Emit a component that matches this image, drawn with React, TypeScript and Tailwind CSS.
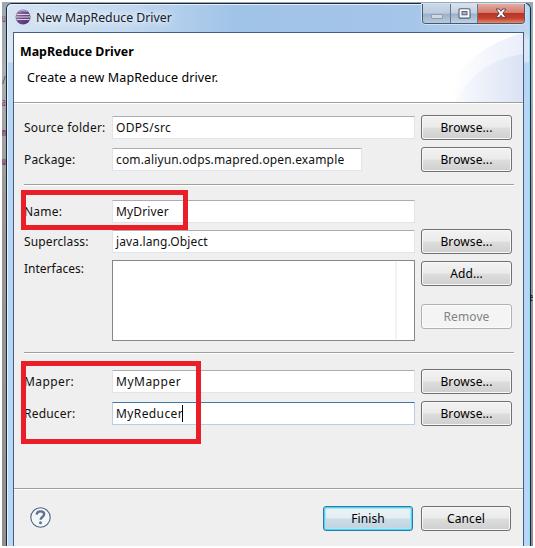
import type { ReactNode } from "react";

function Button({ children, kind = "normal", className = "" }: { children: ReactNode; kind?: "normal" | "default" | "disabled"; className?: string }) {
  const look =
    kind === "default"
      ? "border-[#2c7ba0] text-black bg-[linear-gradient(#eef4f8_0%,#e3edf3_48%,#cbdde8_52%,#bfd3df_100%)] shadow-[inset_0_0_0_1px_#52d3f3,inset_0_0_1px_2px_#a5e6f7]"
      : kind === "disabled"
        ? "border-[#adb2b5] text-[#838383] bg-[#f4f4f4] shadow-[inset_0_0_0_1px_#fbfbfb]"
        : "border-[#707070] text-black bg-[linear-gradient(#f2f2f2_0%,#ebebeb_48%,#dddddd_52%,#cfcfcf_100%)] shadow-[inset_0_0_0_1px_#f8f8f8]";
  return (
    <button className={`flex h-[25px] items-center justify-center rounded-[3px] border tracking-[0.1px] ${look} ${className}`}>
      {children}
    </button>
  );
}

function Field({ value, width = "w-[303px]", spacing, focused = false }: { value: string; width?: string; spacing: string; focused?: boolean }) {
  return (
    <div
      className={`flex h-[23px] items-center rounded-[1px] border bg-white pl-[3px] ${width} ${
        focused ? "border-[#b5cfe7] border-t-[#3d7bad]" : "border-[#e2e3ea] border-t-[#abadb3]"
      }`}
    >
      <span className={spacing}>{value}</span>
      {focused && <span className="-ml-px h-[17px] w-px bg-black" />}
    </div>
  );
}

function Row({ label, spacing, children, button }: { label: string; spacing: string; children: ReactNode; button?: boolean }) {
  return (
    <div className="flex h-[25px] items-center">
      <span className={`w-[88px] ${spacing}`}>{label}</span>
      <div className="w-[309px]">{children}</div>
      {button && <Button className="w-[91px]">Browse...</Button>}
    </div>
  );
}

function Separator() {
  return <div className="h-[2px] w-[490px] border-b border-white bg-[#a0a0a0]" />;
}

function EclipseIcon() {
  return (
    <svg width="16" height="16" viewBox="0 0 16 16">
      <defs>
        <linearGradient id="orb" x1="0" y1="0" x2="1" y2="1">
          <stop offset="0" stopColor="#a08cb2" />
          <stop offset="0.5" stopColor="#6b4b85" />
          <stop offset="1" stopColor="#4a2c66" />
        </linearGradient>
      </defs>
      <circle cx="8" cy="8" r="7.5" fill="url(#orb)" />
      <path d="M1.5 5.5h13M.8 8h14.4M1.5 10.5h13" stroke="#ddd0e8" strokeWidth="1.1" />
      <path d="M4 2.4Q8 .4 12 2.4" stroke="#c1b0cc" fill="none" />
    </svg>
  );
}

function TitleBar() {
  return (
    <div className="flex h-[27px] items-start justify-between">
      <div className="flex items-start pt-[4px] pl-[8px]">
        <EclipseIcon />
        <span className="ml-[5px] text-[12.3px] leading-[18px] text-[#15202c] [text-shadow:0_0_8px_white,0_0_8px_white]">New MapReduce Driver</span>
      </div>
      <div className="-mt-px mr-[5px] flex h-[20px] w-[103px] overflow-hidden rounded-b-[4px] border border-t-0 border-[#4b596b] shadow-[0_0_0_1px_#d0e2f4]">
        <div className="flex w-[28px] justify-center border-r border-[#66778b] bg-[linear-gradient(#cad9e8_0%,#bdccde_48%,#9bb0ca_52%,#b6c9dc_100%)] pt-[10px]">
          <div className="h-[5px] w-[12px] rounded-[1px] border border-[#929eae] bg-[#d0d8e1]" />
        </div>
        <div className="flex w-[27px] justify-center border-r border-[#66778b] bg-[linear-gradient(#d8e2ee_0%,#c3d0df_48%,#9bb0ca_52%,#bfd2e4_100%)] pt-[4px]">
          <svg width="13" height="11" viewBox="0 0 13 11">
            <rect x="1" y=".7" width="11" height="9.4" rx="1" fill="#f9fafc" stroke="#526073" strokeWidth="1.1" />
            <rect x="4" y="3.6" width="5" height="3.2" fill="#a8b8cb" stroke="#526073" />
          </svg>
        </div>
        <div className="flex flex-1 justify-center bg-[linear-gradient(#e5aba1_0%,#d37b6d_45%,#b83526_50%,#c6402d_75%,#e08a6c_100%)] pt-[4px]">
          <svg width="12" height="11" viewBox="0 0 12 11">
            <path d="M1 1h3.2L6 3.3 7.8 1H11L7.8 5.3 11 9.6H7.8L6 7.3 4.2 9.6H1l3.2-4.3z" fill="white" stroke="#5d4650" strokeWidth="1" />
          </svg>
        </div>
      </div>
    </div>
  );
}

function Header() {
  return (
    <div className="flex h-[69px] justify-between bg-white">
      <div className="pt-[10px] pl-[6px] text-black">
        <div className="text-[12.4px] leading-[18px] font-bold">MapReduce Driver</div>
        <div className="mt-[8px] pl-[7px] text-[12.5px] leading-[18px] tracking-[0.1px]">Create a new MapReduce driver.</div>
      </div>
      <svg width="80" height="69" viewBox="0 0 80 69">
        <defs>
          <linearGradient id="arcA" x1="0" x2="1">
            <stop offset="0.1" stopColor="#fff" />
            <stop offset="1" stopColor="#e9eef9" />
          </linearGradient>
          <linearGradient id="arcB" x1="0" x2="1">
            <stop offset="0" stopColor="#f9fbfe" />
            <stop offset="1" stopColor="#dae2f4" />
          </linearGradient>
        </defs>
        <path d="M0 69Q20 16 80 0V69Z" fill="url(#arcA)" />
        <path d="M12 69Q33 28 80 21V69Z" fill="url(#arcB)" />
      </svg>
    </div>
  );
}

export default function App() {
  return (
    <div className="relative h-[548px] w-[535px] overflow-hidden bg-white pt-[2px] pl-[2px] font-['Noto_Sans','Open_Sans',sans-serif] text-[12px] leading-[18px] text-[#111]">
      <div className="flex h-[544px] w-[531px] bg-[linear-gradient(#9aa8b5_0%,#a9b0b6_12%,#999_36%,#909090_100%)] pt-px">
        <div className="w-[4px] shrink-0 text-[10px] leading-[16px] text-[#803070]">
          <div className="mt-[7px] w-[6px] origin-left scale-x-[0.6]">u</div>
          <div className="mt-[46px] w-[4px] text-[#555]">/</div>
          <div className="mt-[6px] w-[6px] origin-left scale-x-[0.65]">a</div>
          <div className="mt-[14px] w-[9px] origin-left scale-x-[0.4] font-bold">m</div>
          <div className="mt-[13px] w-[6px] origin-left scale-x-[0.6] font-bold">u</div>
        </div>
        <div className="h-[543px] w-[525px] shrink-0 rounded-t-[6px] border-x border-t border-[#1b2733] bg-[linear-gradient(90deg,#d5e4f3_0px,#c1d8ef_120px,#a0c3e8_230px,#a5c5e9_400px,#bfd6ef_100%)] shadow-[inset_1px_1px_0_#e4f1fc]">
          <div className="h-[542px] rounded-t-[5px] bg-[linear-gradient(180deg,transparent_28px,#dbe7f5_38px,#d6e4f4_58px,#b9d5f4_59px,#b7d6fa_100%)] pt-px shadow-[inset_1px_0_0_#e6f3ff,inset_-1px_0_0_#89dff8]">
            <TitleBar />
            <div className="ml-[6px] h-[514px] w-[511px] border border-b-0 border-[#435f82] bg-[#efefef]">
              <Header />
              <div className="h-[2px] border-b border-white bg-[#a0a0a0]" />
              <div className="h-[384px] pt-[11px] pl-[10px]">
                <div className="flex flex-col gap-[7px]">
                  <Row label="Source folder:" spacing="tracking-[0.22px]" button><Field value="ODPS/src" spacing="tracking-[0.3px]" /></Row>
                  <Row label="Package:" spacing="tracking-[0.12px]" button><Field value="com.aliyun.odps.mapred.open.example" spacing="tracking-[0.15px]" width="w-[250px]" /></Row>
                </div>
                <div className="mt-[12px] mb-[13px]"><Separator /></div>
                <div className="flex flex-col gap-[5px]">
                  <Row label="Name:" spacing="tracking-[0.2px]"><Field value="MyDriver" spacing="tracking-[0.15px]" /></Row>
                  <Row label="Superclass:" spacing="tracking-[0.12px]" button><Field value="java.lang.Object" spacing="tracking-[0.12px]" /></Row>
                </div>
                <div className="mt-[6px] flex h-[81px]">
                  <span className="w-[88px]">Interfaces:</span>
                  <div className="mr-[6px] flex w-[303px] justify-end border border-[#828790] bg-white py-px pr-[17px]">
                    <div className="w-[2px] bg-[#f1f1f5]" />
                  </div>
                  <div className="flex w-[91px] flex-col gap-[18px] pt-px">
                    <Button>Add...</Button>
                    <Button kind="disabled">Remove</Button>
                  </div>
                </div>
                <div className="mt-[11px] mb-[15px]"><Separator /></div>
                <div className="flex flex-col gap-[7px]">
                  <Row label="Mapper:" spacing="tracking-[0.4px]" button><Field value="MyMapper" spacing="tracking-[0.5px]" /></Row>
                  <Row label="Reducer:" spacing="tracking-[0.2px]" button><Field value="MyReducer" spacing="tracking-[0.4px]" focused /></Row>
                </div>
              </div>
              <div className="h-[2px] border-b border-white bg-[#a0a0a0]" />
              <div className="flex pt-[16px] pl-[16px]">
                <svg className="mt-px" width="21" height="21" viewBox="0 0 21 21">
                  <circle cx="10.5" cy="10.5" r="9.7" fill="#f4f7fa" stroke="#4f6280" strokeWidth="1.1" />
                  <path d="M6.7 7.6C6.8 5.2 8.5 4.3 10.5 4.3c2.3 0 3.7 1.2 3.7 3 0 2.6-3.6 2.8-3.6 5.4" fill="none" stroke="#5c7191" strokeWidth="2.3" />
                  <circle cx="10.5" cy="15.8" r="1.5" fill="#5c7191" />
                </svg>
                <Button kind="default" className="ml-[272px] w-[90px]">Finish</Button>
                <Button className="ml-[8px] w-[90px]">Cancel</Button>
              </div>
            </div>
          </div>
        </div>
        <div className="mt-[286px] -ml-px w-[6px] shrink-0 origin-left scale-x-50 text-[10px] leading-[16px] text-black">e</div>
      </div>
      <div className="absolute top-[190px] left-[21px] h-[40px] w-[167px] border-5 border-[#e91e27]" />
      <div className="absolute top-[361px] left-[21px] h-[83px] w-[180px] border-5 border-[#e91e27]" />
    </div>
  );
}
